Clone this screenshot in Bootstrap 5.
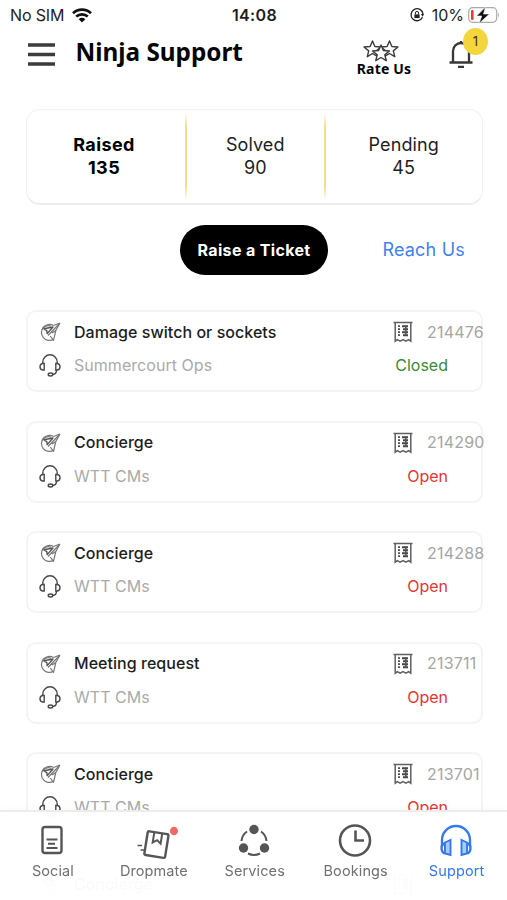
<!DOCTYPE html>
<html lang="en">
<head>
<meta charset="utf-8">
<meta name="viewport" content="width=device-width, initial-scale=1">
<title>Ninja Support</title>
<link href="https://cdn.jsdelivr.net/npm/bootstrap@5.3.0/dist/css/bootstrap.min.css" rel="stylesheet">
<style>
body{font-family:Inter,"Liberation Sans",sans-serif;color:#1d1d1d;background:#fff;height:900px;overflow:hidden;font-size:16px;line-height:1}
.screen{height:900px}
svg{display:block;flex:none;overflow:visible}
.ticket *,.tabs *{white-space:nowrap}
.status{height:30px;padding:0 8px 0 10px;display:grid;grid-template-columns:1fr auto 1fr}
.simless{letter-spacing:-.15px}
.clock{letter-spacing:.35px}
.topbar{height:79px;padding:8px 18px 0 28px}
.title{font:700 24.3px/30px "Noto Sans","Open Sans",sans-serif;color:#050505;margin:-1px 0 0 20.5px}
.rate{width:58px;margin-top:2px;font:700 14px/13px "Noto Sans","Open Sans",sans-serif;color:#050505;letter-spacing:.2px}
.rate svg{margin-left:-7px}
.bell{width:40px;height:40px;margin-left:36px}
.count{right:1px;top:-10px;width:25px;height:27px;border-radius:50%;background:#f3d53c;font-size:13px;color:#3a3310}
.stats{margin:0 24px 0 26px;height:96px;border:1px solid #f2f2f2;border-bottom:2px solid #ededed;border-radius:14px;display:grid;grid-template-columns:158px 1.5px 137.5px 1.5px 1fr}
.stat{font-size:18px;line-height:23px;padding-bottom:1px;letter-spacing:.1px}
.stat.fw-bold{padding-right:4px;letter-spacing:.4px}
.rule{height:87px;align-self:center;background:linear-gradient(#fff,#f5df86 15%,#f5df86 85%,#fff)}
.actions{height:50px;margin:20px 42px 35px 180px}
.raise{width:148px;height:50px;background:#000;color:#fff;font-size:16px;font-weight:700;letter-spacing:.35px;padding:0}
.raise:hover{background:#000;color:#fff}
.reach{font-size:18px;color:#3f82ee;letter-spacing:.2px}
.ticket{height:82px;margin:0 24px 28.6px 26px;border:2px solid #f4f4f4;border-radius:10px;padding:8px 0 0 11px}
.line{height:24px}
.line+.line{margin-top:10px}
.line span{margin-top:-1px}
.line+.line span{margin-top:-2px}
.line+.line svg{margin-top:-1px}
.subject{margin-left:13px;font-size:16px;letter-spacing:.04px;font-weight:450}
.team{margin-left:13px;font-size:16px;color:#aaa;letter-spacing:.04px}
.num{width:57px;margin-left:14px;margin-right:-3px;font-size:16px;color:#a5a5a5;letter-spacing:.2px}
.state{margin-right:33px;font-size:16px;letter-spacing:0}
.open{color:#dc3a32}.closed{color:#3c8836}
.tabs{height:90px;background:rgba(255,255,255,.98);border-top:2px solid #ececec;box-shadow:0 -2px 5px rgba(0,0,0,.025);padding:11px 0 0 2.5px}
.tab{width:101.2px;font-size:14.5px;letter-spacing:.1px;color:#707070;gap:7px}
.tab svg{color:#555}
.tab.on,.tab.on svg{color:#3478ef}
</style>
<script src="https://cdn.jsdelivr.net/npm/bootstrap@5.3.0/dist/js/bootstrap.bundle.min.js"></script>
</head>
<body>
<svg width="0" height="0" class="position-absolute">
  <symbol id="i-plane" viewBox="0 0 22 20"><g fill="none" stroke="#777" stroke-width="1.2" stroke-linejoin="round"><path d="M14.500 3.500A8 8 0 1 0 14.500 17.300"/><path d="M12 4.300A6.600 6.600 0 0 0 3.200 7.500"/><path d="M21 1 14.500 3.500M21 1l-4.200 7.500-2.300 9.800-3.200-4.300"/><path d="M20.500 1.500 9 13.500M16.800 8.500 13 11"/></g><path d="m5 6.800 9-1.800-5.800 6.600-.4-3z" fill="none" stroke="#555" stroke-width="1.400" stroke-linejoin="round"/></symbol>
  <symbol id="i-headset" viewBox="0 0 22 23"><g fill="none" stroke="#484848" stroke-width="1.4"><path d="M3.800 9.500V8a7.200 7.200 0 0 1 14.400 0v1.500"/><path d="M5.200 9.500v6.500H3.600Q1 15.500 1 12.700t2.600-3.200zM16.800 9.500v6.500h1.600Q21 15.500 21 12.700t-2.600-3.200z"/><path d="M17.500 16q0 4.500-4 4.500"/><ellipse cx="11.500" cy="20.500" rx="2.300" ry="1.500"/></g></symbol>
  <symbol id="i-receipt" viewBox="0 0 20 22"><path d="M.5 1.500h19M2.200 1.500v18.700l2.100-1.500 2.800 1.500L10 18.700l2.900 1.500 2.800-1.500 2.100 1.500V1.500" fill="none" stroke="#606060" stroke-width="1.500"/><path d="M5 5.200h2M5 8.200h2M5 11.200h2M5 14.200h2" stroke="#505050" stroke-width="1.800"/><path d="M9 5.200h6M10 8.200h5M9 11.200h6M10 14.200h5" stroke="#444" stroke-width="2.100"/><path d="M12.800 4.500v10.500" stroke="#555" stroke-width="1.600"/></symbol>
</svg>

<div class="screen overflow-hidden">
<div class="status align-items-center">
  <div class="d-flex align-items-center"><span class="simless">No SIM</span>
    <svg class="ms-2" width="20" height="15" viewBox="0 0 20 15" fill="none" stroke="#111" stroke-width="2.700"><path d="M1 5.200a13 13 0 0 1 18 0M4.200 8.600a8.400 8.400 0 0 1 11.600 0"/><path d="M10 14.500 6.700 11.200a4.700 4.700 0 0 1 6.600 0z" fill="#111" stroke="none"/></svg></div>
  <div class="clock fw-semibold">14:08</div>
  <div class="d-flex align-items-center justify-content-end">
    <svg width="14" height="14" viewBox="0 0 14 14" class="me-1"><path d="M12.500 9.200A6 6 0 1 1 13 6" fill="none" stroke="#222" stroke-width="1.300"/><path d="m10.800 6 3.200 0-1.300 2.700z" fill="#222"/><path d="M4.400 6.400h5.200v3.700H4.400z" fill="#222"/><path d="M5.400 6.500V5a1.600 1.600 0 0 1 3.200 0v1.500" fill="none" stroke="#222"/></svg>
    <span class="ms-1 me-1">10%</span>
    <svg width="31" height="16" viewBox="0 0 31 16"><rect x=".7" y=".7" width="28" height="14.600" rx="4" fill="#fff" stroke="#aaa" stroke-width="1.200"/><rect x="3" y="3" width="2.600" height="10" rx="1" fill="#ed3b30"/><path d="M30 5.500q2 2.500 0 5z" fill="#aaa"/><path d="M17.500 0 8.500 9h5.200l-2.700 7.500L21.500 7h-6z" fill="#111" stroke="#fff" stroke-width=".6"/></svg>
  </div>
</div>

<header class="topbar d-flex align-items-start">
  <svg width="27" height="24" viewBox="0 0 27 24" class="mt-1"><path d="M0 3h27M0 12.500h27M0 22h27" stroke="#3c3c3c" stroke-width="3.600"/></svg>
  <h1 class="title">Ninja Support</h1>
  <div class="rate ms-auto d-flex flex-column align-items-center">
    <svg width="36" height="22" viewBox="0 0 36 22" fill="#fff" stroke="#3c3c3c" stroke-width="1.400" stroke-linejoin="round"><path d="m9.500 1 2.400 5.500 6 .5-4.600 3.900 1.500 5.800-5.300-3.200-5.200 3.200 1.400-5.800L1 7l6.100-.5z"/><path d="m26.500 1 2.400 5.500 6 .5-4.600 3.900 1.500 5.800-5.300-3.200-5.200 3.200 1.400-5.800L18 7l6.100-.5z"/><path d="m18 5 2.400 5.500 6 .5-4.600 3.900 1.500 5.800L18 17.500l-5.200 3.200 1.400-5.800L9.500 11l6.100-.5z"/></svg>
    <span class="text-nowrap">Rate Us</span>
  </div>
  <div class="bell position-relative">
    <svg width="24" height="30" viewBox="0 0 24 30" fill="none" stroke="#383838" stroke-width="2.300"><path d="M4 24V13a8 8 0 0 1 16 0v11M.5 24.500h23M9 28.800h6M12 5V3"/></svg>
    <span class="count position-absolute d-flex align-items-center justify-content-center">1</span>
  </div>
</header>

<section class="stats text-center">
  <div class="stat align-self-center fw-bold text-black">Raised<br>135</div><div class="rule"></div>
  <div class="stat align-self-center">Solved<br>90</div><div class="rule"></div>
  <div class="stat align-self-center">Pending<br>45</div>
</section>

<div class="actions d-flex align-items-center justify-content-between">
  <button class="btn raise rounded-pill">Raise a Ticket</button>
  <a class="reach text-decoration-none" href="#">Reach Us</a>
</div>

<main>
  <article class="ticket">
    <div class="line d-flex align-items-center"><svg width="22" height="20"><use href="#i-plane"/></svg><span class="subject">Damage switch or sockets</span><svg class="ms-auto" width="20" height="22"><use href="#i-receipt"/></svg><span class="num">214476</span></div>
    <div class="line d-flex align-items-center"><svg width="22" height="23"><use href="#i-headset"/></svg><span class="team">Summercourt Ops</span><span class="state closed ms-auto">Closed</span></div>
  </article>
  <article class="ticket">
    <div class="line d-flex align-items-center"><svg width="22" height="20"><use href="#i-plane"/></svg><span class="subject">Concierge</span><svg class="ms-auto" width="20" height="22"><use href="#i-receipt"/></svg><span class="num">214290</span></div>
    <div class="line d-flex align-items-center"><svg width="22" height="23"><use href="#i-headset"/></svg><span class="team">WTT CMs</span><span class="state open ms-auto">Open</span></div>
  </article>
  <article class="ticket">
    <div class="line d-flex align-items-center"><svg width="22" height="20"><use href="#i-plane"/></svg><span class="subject">Concierge</span><svg class="ms-auto" width="20" height="22"><use href="#i-receipt"/></svg><span class="num">214288</span></div>
    <div class="line d-flex align-items-center"><svg width="22" height="23"><use href="#i-headset"/></svg><span class="team">WTT CMs</span><span class="state open ms-auto">Open</span></div>
  </article>
  <article class="ticket">
    <div class="line d-flex align-items-center"><svg width="22" height="20"><use href="#i-plane"/></svg><span class="subject">Meeting request</span><svg class="ms-auto" width="20" height="22"><use href="#i-receipt"/></svg><span class="num">213711</span></div>
    <div class="line d-flex align-items-center"><svg width="22" height="23"><use href="#i-headset"/></svg><span class="team">WTT CMs</span><span class="state open ms-auto">Open</span></div>
  </article>
  <article class="ticket">
    <div class="line d-flex align-items-center"><svg width="22" height="20"><use href="#i-plane"/></svg><span class="subject">Concierge</span><svg class="ms-auto" width="20" height="22"><use href="#i-receipt"/></svg><span class="num">213701</span></div>
    <div class="line d-flex align-items-center"><svg width="22" height="23"><use href="#i-headset"/></svg><span class="team">WTT CMs</span><span class="state open ms-auto">Open</span></div>
  </article>
  <article class="ticket">
    <div class="line d-flex align-items-center"><svg width="22" height="20"><use href="#i-plane"/></svg><span class="subject">Concierge</span><svg class="ms-auto" width="20" height="22"><use href="#i-receipt"/></svg><span class="num"></span></div>
  </article>
</main>
</div>

<nav class="tabs fixed-bottom d-flex">
  <div class="tab d-flex flex-column align-items-center"><svg width="34" height="34" viewBox="0 0 34 34" fill="none" stroke="currentColor" stroke-width="2.400"><rect x="6.500" y="4" width="19" height="26" rx="2.500"/><path d="M10.500 16.500h11M12 20.800h7M10.500 25h11" stroke-width="2"/></svg><span>Social</span></div>
  <div class="tab d-flex flex-column align-items-center"><svg width="34" height="34" viewBox="0 0 34 34" fill="none" stroke="currentColor" stroke-width="2.400"><g transform="rotate(9 19 21)"><rect x="9" y="9.500" width="21" height="24" rx="1.500"/><path d="M15.500 10v10l4-3 4 3V10" stroke-width="2"/></g><path d="M.5 22.500h4.500M3.500 27h4.500" stroke-width="1.600"/><ellipse cx="37" cy="8" rx="4" ry="4.300" fill="#ef6a67" stroke="none"/></svg><span>Dropmate</span></div>
  <div class="tab d-flex flex-column align-items-center"><svg width="34" height="34" viewBox="0 0 34 34" fill="none" stroke="currentColor" stroke-width="2"><g fill="currentColor" stroke="none"><circle cx="16" cy="6.500" r="4.700"/><circle cx="5.500" cy="25" r="4.700"/><circle cx="26.500" cy="25" r="4.700"/></g><path d="M9 8.500a13 13 0 0 0-5.500 9.500M23 8.500a13 13 0 0 1 5.500 9.500M10 30.500q6 2.800 12 0"/></svg><span>Services</span></div>
  <div class="tab d-flex flex-column align-items-center"><svg width="34" height="34" viewBox="0 0 34 34" fill="none" stroke="currentColor" stroke-width="2.600"><circle cx="16" cy="17.500" r="15"/><path d="M16.500 7.500v10H25"/></svg><span>Bookings</span></div>
  <div class="tab on d-flex flex-column align-items-center"><svg width="34" height="34" viewBox="0 0 34 34" fill="none" stroke="currentColor" stroke-width="2.300"><path d="M2 24v-7a14 14 0 0 1 28 0v7"/><path d="M4.500 20.500Q1.500 21 1.500 25t3 5.500M27.500 20.500Q30.500 21 30.500 25t-3 5.500"/><path d="M5 19.500 10.500 17v15L5 30.500zM27 19.500 21.500 17v15l5.500-1.500z" fill="#a9cdfb" stroke-width="1.900"/></svg><span>Support</span></div>
</nav>
</body>
</html>
